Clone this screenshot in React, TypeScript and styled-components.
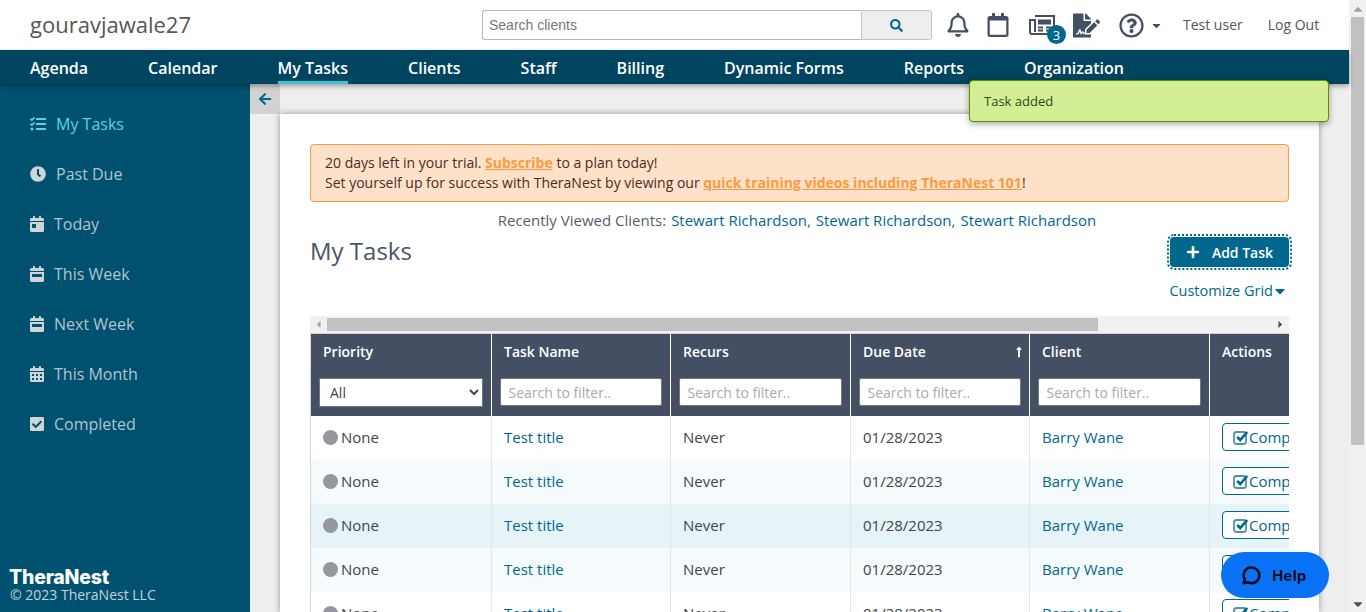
import React from "react";
import styled, { createGlobalStyle } from "styled-components";
import {
  FaRegBell, FaRegCalendar, FaFileSignature, FaRegQuestionCircle, FaCaretDown, FaCaretUp, FaCaretLeft, FaCaretRight,
  FaArrowLeft, FaTasks, FaClock, FaCalendarDay, FaCalendarWeek, FaCalendarAlt, FaCheckSquare, FaPlus, FaSearch, FaLongArrowAltUp,
} from "react-icons/fa";

const Global = createGlobalStyle`
  html, body { margin: 0; padding: 0; height: 612px; overflow: hidden; background: #fff; }
  body { font-family: "Open Sans", "Liberation Sans", sans-serif; font-size: 14px; color: #444; }
  * { box-sizing: border-box; }
`;

const Shell = styled.div`display: flex; width: 1366px; height: 612px; overflow: hidden; position: relative;`;
const Page = styled.div`flex: 1; min-width: 0; display: flex; flex-direction: column;`;

const Scrollbar = styled.div`width: 17px; background: #f1f1f1; display: flex; flex-direction: column; align-items: center; color: #a3a3a3;`;
const ScrollCap = styled.div`height: 17px; display: flex; align-items: center; justify-content: center; font-size: 14px; color: ${p => p.$dark ? "#505050" : "#a3a3a3"};`;
const ScrollThumb = styled.div`width: 13px; height: 428px; background: #c1c1c1; margin-bottom: auto;`;

const TopBar = styled.header`height: 50px; flex: none; background: #fff; display: flex; align-items: center; padding: 0 30px;`;
const Brand = styled.div`font-size: 22px; color: #555; width: 452px; flex: none; position: relative; top: -1px;`;
const SearchBox = styled.div`display: flex; width: 450px; height: 30px; flex: none;`;
const SearchInput = styled.input`
  flex: 1; min-width: 0; border: 1px solid #b9b9b9; border-right: 0; border-radius: 3px 0 0 3px; padding: 0 6px;
  font: 14px "Liberation Sans", sans-serif; color: #555; outline: none;
  &::placeholder { color: #777; opacity: 1; }
`;
const SearchBtn = styled.button`width: 71px; flex: none; border: 1px solid #c4c4c4; border-radius: 0 3px 3px 0; background: #eee; color: #00688f; font-size: 13px; display: flex; align-items: center; justify-content: center; padding: 0;`;
const IconRow = styled.div`display: flex; align-items: center; color: #454f63; margin-left: 14px; height: 50px;`;
const IconSlot = styled.div`width: ${p => p.$w}px; height: 24px; display: flex; justify-content: center; align-items: center; position: relative; font-size: ${p => p.$size || 24}px;`;
const Badge = styled.span`position: absolute; left: 21px; top: 12px; width: 19px; height: 19px; border-radius: 50%; background: #00688f; color: #fff; font-size: 13px; display: flex; align-items: center; justify-content: center;`;
const TopLink = styled.a`font-size: 14px; color: #555; margin-left: ${p => p.$ml}px; white-space: nowrap; position: relative; top: -1px;`;

const NavBar = styled.nav`height: 34px; flex: none; background: #00455f; display: flex; gap: 60px; padding-left: 30px; position: relative; z-index: 2; box-shadow: 0 2px 5px rgba(0,0,0,.35);`;
const NavItem = styled.a`
  font-size: 16px; font-weight: 600; color: #fff; line-height: 37px; height: 34px; white-space: nowrap;
  border-bottom: ${p => p.$active ? "3px solid #3cc5dc" : "0"};
`;

const Body = styled.div`flex: 1; min-height: 0; display: flex;`;
const Sidebar = styled.aside`width: 250px; flex: none; background: #00516f; padding-top: 15px; display: flex; flex-direction: column;`;
const SideItem = styled.a`
  height: 50px; flex: none; padding-left: 30px; display: flex; align-items: center; gap: 10px; font-size: 16px;
  color: ${p => p.$active ? "#5ad4ea" : "#b3c4cc"};
  svg { width: ${p => p.$iconW || 14}px; height: 16px; color: ${p => p.$active ? "#5ad4ea" : "#cfd4d7"}; }
`;
const SideFooter = styled.div`margin-top: auto; padding: 0 0 9px 10px; color: #c6d2d8; font-size: 14px; line-height: 17px;`;
const Logo = styled.div`font-family: Inter, sans-serif; font-weight: 800; font-size: 19.5px; line-height: 17px; color: #fff; letter-spacing: -.2px; margin-left: -1px;`;

const Content = styled.main`flex: 1; min-width: 0; background: #eee; display: flex; flex-direction: column; overflow: hidden;`;
const Collapse = styled.div`height: 30px; flex: none;`;
const CollapseBtn = styled.button`width: 30px; height: 30px; border: 0; padding: 0; background: #d2d2d2; color: #00688f; font-size: 14px; display: flex; align-items: center; justify-content: center;`;
const Card = styled.section`flex: 1; min-height: 0; margin: 0 30px; background: #fff; padding: 30px 30px 0; box-shadow: 0 0 6px rgba(0,0,0,.4); overflow: hidden;`;

const Alert = styled.div`height: 58px; background: #fde1c9; border: 1px solid #fb9b3f; border-radius: 4px; padding: 8px 14px; font-size: 14px; line-height: 20px; color: #4e2b24;`;
const AlertLink = styled.a`color: #fb9b3f; font-weight: 700; text-decoration: underline;`;
const Recent = styled.div`margin-top: 8px; text-align: center; font-size: 15px; line-height: 20px; color: #555f6e; padding-right: 5px;`;
const ClientLink = styled.a`color: #00688f; margin-left: 5px;`;
const TitleRow = styled.div`display: flex; justify-content: space-between; align-items: flex-start; margin-top: 7px;`;
const Title = styled.h1`margin: -2px 0 0; font-size: 24px; font-weight: 400; color: #4a5568; line-height: 32px;`;
const AddBtn = styled.button`
  width: 119px; height: 30px; border: 0; border-radius: 4px; background: #00688f; color: #fff; font: 600 14px "Open Sans", sans-serif;
  display: flex; align-items: center; justify-content: center; gap: 12px; outline: 2px dotted #00688f; outline-offset: 1px; padding: 0;
  svg { font-size: 14px; }
`;
const GridLink = styled.div`
  display: flex; justify-content: flex-end; align-items: center; color: #00688f; font-weight: 500; font-size: 14.5px; line-height: 20px; margin-top: 14px; padding-right: 1px;
  svg { font-size: 16px; margin-left: -1px; flex: none; }
`;

const HScroll = styled.div`height: 17px; margin-top: 15px; background: #f1f1f1; display: flex; align-items: center; color: #505050; font-size: 11px;`;
const HCap = styled.div`width: 17px; display: flex; justify-content: center; color: ${p => p.$light ? "#a3a3a3" : "#505050"};`;
const HThumb = styled.div`width: 771px; height: 13px; background: #c1c1c1; margin-right: auto;`;

const TableWrap = styled.div`overflow: hidden; border-top: 1px solid #d5d5d5; border-left: 1px solid #d5d5d5;`;
const Table = styled.table`width: 1078px; table-layout: fixed; border-collapse: collapse;`;
const Th = styled.th`
  height: 82px; padding: 0; background: #454f63; color: #fff; vertical-align: top; text-align: left; font-weight: 600; font-size: 14px;
  border-right: 1px solid #fff; position: relative;
  &:first-child > div:first-child { padding-left: 12px; }
`;
const ThTitle = styled.div`height: 44px; line-height: 36px; padding-left: 12.5px; display: flex; justify-content: space-between; padding-right: 4px;`;
const FilterInput = styled.input`
  display: block; width: calc(100% - 16px); height: 28px; margin-left: 8px; border: 1px solid #777; border-radius: 2px; padding: 0 8px; outline: none; background: #fff;
  font: 14px "Open Sans", sans-serif; color: #555;
  &::placeholder { color: #aaa; opacity: 1; }
`;
const FilterSelect = styled.select`
  display: block; width: 164px; height: 29px; margin-left: 8px; border: 1px solid #777; border-radius: 0; padding: 0 6px; background: #fff;
  font: 14px "Open Sans", sans-serif; color: #444; outline: none;
`;
const Tr = styled.tr`background: ${p => p.$bg};`;
const Td = styled.td`
  height: 44px; padding: 0 0 2px 12.5px; font-size: 15px; color: #444; border-right: 1px solid #e2e6e9; white-space: nowrap; overflow: hidden;
  &:first-child { padding-left: 12px; }
`;
const Dot = styled.span`display: inline-block; width: 15px; height: 15px; border-radius: 50%; background: #96969e; vertical-align: -2px; margin-right: 3px;`;
const CellLink = styled.a`color: #00688f;`;
const CompleteBtn = styled.span`
  display: inline-flex; align-items: center; width: 90px; height: 28px; border: 1px solid #00688f; border-radius: 4px; padding-left: 10px; background: #fff; color: #00688f; font-size: 15px; vertical-align: middle;
  svg { flex: none; }
`;

const Toast = styled.div`
  position: absolute; left: 969px; top: 80px; width: 360px; height: 42px; background: #d3ee93; border: 1px solid #5f8f00; border-radius: 4px;
  box-shadow: 0 2px 6px rgba(0,0,0,.35); padding: 0 14px; display: flex; align-items: center; font-size: 13px; color: #2c4a17; z-index: 5;
`;
const Help = styled.div`
  position: absolute; left: 1221px; top: 552px; width: 108px; height: 46px; border-radius: 23px; background: #0a72f5; color: #050a1c; z-index: 5;
  display: flex; align-items: center; justify-content: center; gap: 10px; padding-right: 3px; font: 700 14.5px Inter, "Liberation Sans", sans-serif; letter-spacing: .5px;
`;

const PaperIcon = () => (
  <svg width="27" height="24" viewBox="0 0 27 24" fill="none" stroke="#454f63" strokeWidth="2">
    <path d="M6 3h19v16a2 2 0 0 1-2 2H3a2 2 0 0 1-2-2V7h5v12" />
    <rect x="9" y="6.5" width="13" height="5" fill="#454f63" stroke="none" />
    <path d="M9 14.5h5M9 17.5h5M17 14.5h5M17 17.5h5" strokeWidth="1.8" />
  </svg>
);

const CheckIcon = () => (
  <svg width="16" height="15" viewBox="0 0 16 15" fill="none">
    <rect x="1" y="2" width="12" height="12" rx="2.5" stroke="#4f93ad" strokeWidth="1.8" />
    <path d="M4.2 6.8l3 3.2 7-8" stroke="#00688f" strokeWidth="2.6" />
  </svg>
);

const nav = ["Agenda", "Calendar", "My Tasks", "Clients", "Staff", "Billing", "Dynamic Forms", "Reports", "Organization"];
const side = [
  { t: "My Tasks", i: <FaTasks />, w: 16, a: true },
  { t: "Past Due", i: <FaClock />, w: 16 },
  { t: "Today", i: <FaCalendarDay /> },
  { t: "This Week", i: <FaCalendarWeek /> },
  { t: "Next Week", i: <FaCalendarWeek /> },
  { t: "This Month", i: <FaCalendarAlt /> },
  { t: "Completed", i: <FaCheckSquare /> },
];
const rows = ["#fff", "#f5fbfd", "#e6f4f8", "#f5fbfd", "#fff"];
const cols = ["Task Name", "Recurs", "Due Date", "Client"];
const widths = [180, 179, 180, 179, 180, 180];

export default function App() {
  return (
    <Shell>
      <Global />
      <Page>
        <TopBar>
          <Brand>gouravjawale27</Brand>
          <SearchBox>
            <SearchInput placeholder="Search clients" />
            <SearchBtn><FaSearch /></SearchBtn>
          </SearchBox>
          <IconRow>
            <IconSlot $w={24}><FaRegBell /></IconSlot>
            <IconSlot $w={56}><FaRegCalendar /></IconSlot>
            <IconSlot $w={32}><PaperIcon /><Badge>3</Badge></IconSlot>
            <IconSlot $w={56} $size={27}><FaFileSignature /></IconSlot>
            <IconSlot $w={34} $size={25}><FaRegQuestionCircle /></IconSlot>
            <IconSlot $w={16} $size={13}><FaCaretDown /></IconSlot>
          </IconRow>
          <TopLink $ml={19}>Test user</TopLink>
          <TopLink $ml={25}>Log Out</TopLink>
        </TopBar>
        <NavBar>
          {nav.map(n => <NavItem key={n} $active={n === "My Tasks"}>{n}</NavItem>)}
        </NavBar>
        <Body>
          <Sidebar>
            {side.map(s => <SideItem key={s.t} $active={s.a} $iconW={s.w}>{s.i}{s.t}</SideItem>)}
            <SideFooter>
              <Logo>TheraNest</Logo>
              © 2023 TheraNest LLC
            </SideFooter>
          </Sidebar>
          <Content>
            <Collapse><CollapseBtn><FaArrowLeft /></CollapseBtn></Collapse>
            <Card>
              <Alert>
                20 days left in your trial. <AlertLink>Subscribe</AlertLink> to a plan today!<br />
                Set yourself up for success with TheraNest by viewing our <AlertLink>quick training videos including TheraNest 101</AlertLink>!
              </Alert>
              <Recent>
                Recently Viewed Clients:
                <ClientLink>Stewart Richardson</ClientLink>,
                <ClientLink>Stewart Richardson</ClientLink>,
                <ClientLink>Stewart Richardson</ClientLink>
              </Recent>
              <TitleRow>
                <Title>My Tasks</Title>
                <AddBtn><FaPlus />Add Task</AddBtn>
              </TitleRow>
              <GridLink>Customize Grid<FaCaretDown /></GridLink>
              <HScroll>
                <HCap $light><FaCaretLeft /></HCap>
                <HThumb />
                <HCap><FaCaretRight /></HCap>
              </HScroll>
              <TableWrap>
                <Table>
                  <colgroup>{widths.map((w, i) => <col key={i} style={{ width: w }} />)}</colgroup>
                  <thead>
                    <tr>
                      <Th>
                        <ThTitle>Priority</ThTitle>
                        <FilterSelect defaultValue="All"><option>All</option></FilterSelect>
                      </Th>
                      {cols.map(c => (
                        <Th key={c}>
                          <ThTitle>{c}{c === "Due Date" && <FaLongArrowAltUp size={12} style={{ marginTop: 12 }} />}</ThTitle>
                          <FilterInput placeholder="Search to filter.." />
                        </Th>
                      ))}
                      <Th><ThTitle>Actions</ThTitle></Th>
                    </tr>
                  </thead>
                  <tbody>
                    {rows.map((bg, i) => (
                      <Tr key={i} $bg={bg}>
                        <Td><Dot />None</Td>
                        <Td><CellLink>Test title</CellLink></Td>
                        <Td>Never</Td>
                        <Td>01/28/2023</Td>
                        <Td><CellLink>Barry Wane</CellLink></Td>
                        <Td><CompleteBtn><CheckIcon />Complete</CompleteBtn></Td>
                      </Tr>
                    ))}
                  </tbody>
                </Table>
              </TableWrap>
            </Card>
          </Content>
        </Body>
      </Page>
      <Scrollbar>
        <ScrollCap><FaCaretUp /></ScrollCap>
        <ScrollThumb />
        <ScrollCap $dark><FaCaretDown /></ScrollCap>
      </Scrollbar>
      <Toast>Task added</Toast>
      <Help>
        <svg width="22" height="22" viewBox="0 0 24 24" fill="none" stroke="#050a1c" strokeWidth="2.8" strokeLinejoin="round">
          <path d="M4 21l1.2-4.2A8.6 8.6 0 1 1 8.6 20 z" />
        </svg>
        Help
      </Help>
    </Shell>
  );
}
